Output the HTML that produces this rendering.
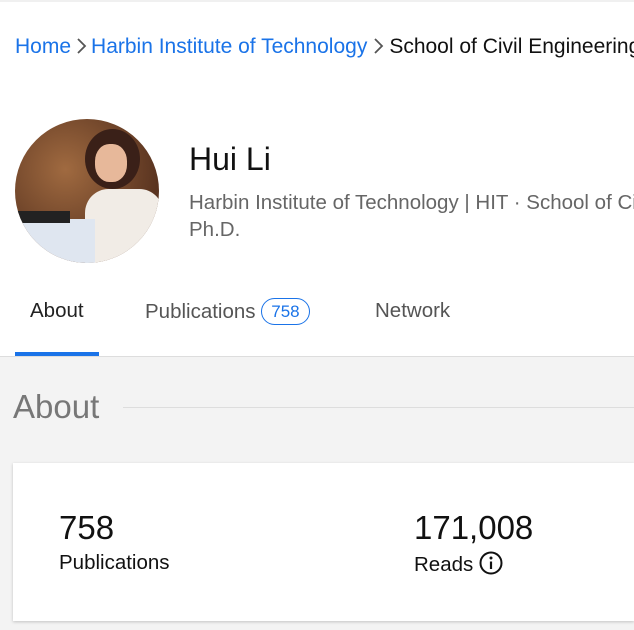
<!DOCTYPE html>
<html><head><style>
*{margin:0;padding:0;box-sizing:border-box}
html,body{width:634px;height:630px;overflow:hidden}
body{background:#fff;font-family:"Liberation Sans",Arial,sans-serif;position:relative}
#w{position:absolute;left:0;top:0;width:634px;height:630px;overflow:hidden}
.a{position:absolute;white-space:nowrap}
</style></head><body><div id="w">
<div class="a" style="top:0;left:0;width:634px;height:2px;background:#f0f0f0"></div>
<div class="a" style="top:35px;left:15px;font-size:21px;color:#333;width:619px;overflow:hidden">
<span style="color:#1a73e8">Home</span><svg width="18" height="20" viewBox="0 0 18 20" style="vertical-align:-3px;margin:0 1px"><path d="M6 3l7 7-7 7" fill="none" stroke="#555" stroke-width="1.8"/></svg><span style="color:#1a73e8">Harbin Institute of Technology</span><svg width="20" height="20" viewBox="0 0 20 20" style="vertical-align:-3px;margin:0 1px"><path d="M7 3l7 7-7 7" fill="none" stroke="#555" stroke-width="1.8"/></svg><span style="color:#111">School of Civil Engineering</span></div>
<div class="a" style="top:119px;left:15px;width:144px;height:144px;border-radius:50%;overflow:hidden;background:radial-gradient(circle at 35% 35%,#a06a40,#5a3420 70%)">
<div class="a" style="left:70px;top:10px;width:55px;height:60px;border-radius:50%;background:#3a2018"></div>
<div class="a" style="left:80px;top:25px;width:32px;height:38px;border-radius:45%;background:#e7b89a"></div>
<div class="a" style="left:70px;top:70px;width:78px;height:80px;border-radius:30% 30% 0 0;background:#f1ece6"></div>
<div class="a" style="left:0;top:100px;width:80px;height:50px;background:#dfe6f0"></div>
<div class="a" style="left:0;top:92px;width:55px;height:12px;background:#222"></div>
</div>
<div class="a" style="top:141px;left:189px;font-size:32px;color:#111">Hui Li</div>
<div class="a" style="top:191px;left:189px;font-size:20.5px;color:#666;width:445px;overflow:hidden">Harbin Institute of Technology | HIT · School of Civil Engineering</div>
<div class="a" style="top:218px;left:189px;font-size:20.5px;color:#666">Ph.D.</div>
<div class="a" style="top:299px;left:30px;font-size:20.5px;color:#222">About</div>
<div class="a" style="top:298px;left:145px;font-size:20.5px;color:#555">Publications <span style="display:inline-block;border:1.5px solid #1a73e8;border-radius:14px;color:#1a73e8;font-size:17px;padding:1px 9px;line-height:23px;vertical-align:1px">758</span></div>
<div class="a" style="top:299px;left:375px;font-size:20.5px;color:#555">Network</div>
<div class="a" style="top:352px;left:15px;width:84px;height:4px;background:#1a73e8"></div>
<div class="a" style="top:356px;left:0;width:634px;height:274px;background:#f3f3f3;border-top:1px solid #ddd"></div>
<div class="a" style="top:388px;left:13px;font-size:33px;color:#777">About</div>
<div class="a" style="top:407px;left:123px;width:511px;height:1px;background:#ddd"></div>
<div class="a" style="top:463px;left:13px;width:621px;height:158px;background:#fff;box-shadow:0 1px 3px rgba(0,0,0,.2)"></div>
<div class="a" style="top:509px;left:59px;font-size:33px;color:#111">758</div>
<div class="a" style="top:551px;left:59px;font-size:20.5px;color:#111">Publications</div>
<div class="a" style="top:509px;left:414px;font-size:33px;color:#111">171,008</div>
<div class="a" style="top:551px;left:414px;font-size:20.5px;color:#111">Reads <svg width="24" height="24" viewBox="0 0 24 24" style="vertical-align:-4px"><circle cx="12" cy="12" r="10.5" fill="none" stroke="#111" stroke-width="2"/><circle cx="12" cy="7" r="1.5" fill="#111"/><path d="M12 10.5v7.5" stroke="#111" stroke-width="2.2"/></svg></div>
</div></body></html>
